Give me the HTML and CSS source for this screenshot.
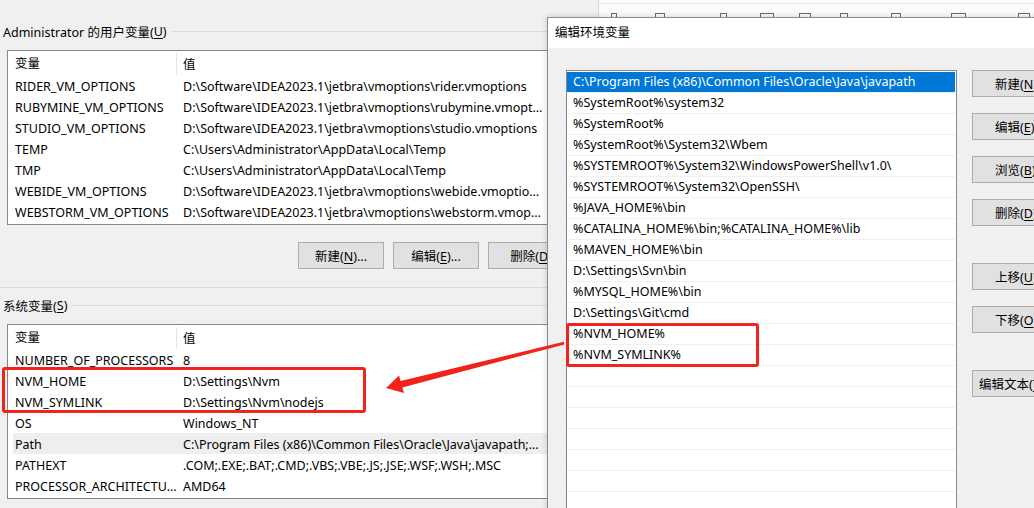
FILE: index.html
```html
<!DOCTYPE html>
<html lang="zh-CN">
<head>
    <meta charset="UTF-8">
    <title>环境变量</title>
    <link rel="stylesheet" href="styles.css">
</head>
<body>
    <!-- Main window: user and system variables -->
    <div class="main-window">
        <div class="group-title user">Administrator 的用户变量(<u>U</u>)</div>
        <div class="var-table user-table">
            <div class="var-head"><div class="col-name">变量</div><div class="col-value">值</div></div>
            <div class="var-row"><div class="col-name">RIDER_VM_OPTIONS</div><div class="col-value">D:\Software\IDEA2023.1\jetbra\vmoptions\rider.vmoptions</div></div>
            <div class="var-row"><div class="col-name">RUBYMINE_VM_OPTIONS</div><div class="col-value">D:\Software\IDEA2023.1\jetbra\vmoptions\rubymine.vmoptions</div></div>
            <div class="var-row"><div class="col-name">STUDIO_VM_OPTIONS</div><div class="col-value">D:\Software\IDEA2023.1\jetbra\vmoptions\studio.vmoptions</div></div>
            <div class="var-row"><div class="col-name">TEMP</div><div class="col-value">C:\Users\Administrator\AppData\Local\Temp</div></div>
            <div class="var-row"><div class="col-name">TMP</div><div class="col-value">C:\Users\Administrator\AppData\Local\Temp</div></div>
            <div class="var-row"><div class="col-name">WEBIDE_VM_OPTIONS</div><div class="col-value">D:\Software\IDEA2023.1\jetbra\vmoptions\webide.vmoptions</div></div>
            <div class="var-row"><div class="col-name">WEBSTORM_VM_OPTIONS</div><div class="col-value">D:\Software\IDEA2023.1\jetbra\vmoptions\webstorm.vmoptions</div></div>
        </div>

        <div class="btn-row">
            <button class="win-btn">新建(<u>N</u>)...</button>
            <button class="win-btn">编辑(<u>E</u>)...</button>
            <button class="win-btn">删除(<u>D</u>)</button>
        </div>

        <div class="divider"></div>

        <div class="group-title system">系统变量(<u>S</u>)</div>
        <div class="var-table sys-table">
            <div class="var-head"><div class="col-name">变量</div><div class="col-value">值</div></div>
            <div class="var-row"><div class="col-name">NUMBER_OF_PROCESSORS</div><div class="col-value">8</div></div>
            <div class="var-row"><div class="col-name">NVM_HOME</div><div class="col-value">D:\Settings\Nvm</div></div>
            <div class="var-row"><div class="col-name">NVM_SYMLINK</div><div class="col-value">D:\Settings\Nvm\nodejs</div></div>
            <div class="var-row"><div class="col-name">OS</div><div class="col-value">Windows_NT</div></div>
            <div class="var-row selected"><div class="col-name">Path</div><div class="col-value">C:\Program Files (x86)\Common Files\Oracle\Java\javapath;C:\Windows\system32</div></div>
            <div class="var-row"><div class="col-name">PATHEXT</div><div class="col-value">.COM;.EXE;.BAT;.CMD;.VBS;.VBE;.JS;.JSE;.WSF;.WSH;.MSC</div></div>
            <div class="var-row"><div class="col-name">PROCESSOR_ARCHITECTURE</div><div class="col-value">AMD64</div></div>
        </div>
    </div>

    <!-- Window peeking out behind the dialog -->
    <div class="back-window">
        <div class="tool-tips">
            <span class="tip" style="margin-left:12px;width:6px"></span>
            <span class="tip" style="margin-left:38px;width:10px"></span>
            <span class="tip" style="margin-left:55px;width:7px"></span>
            <span class="tip" style="margin-left:33px;width:14px"></span>
            <span class="tip" style="margin-left:25px;width:12px"></span>
            <span class="tip" style="margin-left:29px;width:8px"></span>
            <span class="tip" style="margin-left:43px;width:10px"></span>
            <span class="tip" style="margin-left:50px;width:15px"></span>
            <span class="tip" style="margin-left:52px;width:12px"></span>
        </div>
    </div>

    <!-- Edit dialog -->
    <div class="edit-dialog">
        <div class="dialog-title">编辑环境变量</div>
        <div class="dialog-body">
            <div class="path-list">
                <div class="path-row selected">C:\Program Files (x86)\Common Files\Oracle\Java\javapath</div>
                <div class="path-row">%SystemRoot%\system32</div>
                <div class="path-row">%SystemRoot%</div>
                <div class="path-row">%SystemRoot%\System32\Wbem</div>
                <div class="path-row">%SYSTEMROOT%\System32\WindowsPowerShell\v1.0\</div>
                <div class="path-row">%SYSTEMROOT%\System32\OpenSSH\</div>
                <div class="path-row">%JAVA_HOME%\bin</div>
                <div class="path-row">%CATALINA_HOME%\bin;%CATALINA_HOME%\lib</div>
                <div class="path-row">%MAVEN_HOME%\bin</div>
                <div class="path-row">D:\Settings\Svn\bin</div>
                <div class="path-row">%MYSQL_HOME%\bin</div>
                <div class="path-row">D:\Settings\Git\cmd</div>
                <div class="path-row">%NVM_HOME%</div>
                <div class="path-row">%NVM_SYMLINK%</div>
                <div class="path-row"></div>
                <div class="path-row"></div>
                <div class="path-row"></div>
                <div class="path-row"></div>
                <div class="path-row"></div>
                <div class="path-row"></div>
                <div class="path-row"></div>
            </div>
            <div class="side-btns">
                <button class="win-btn side-btn">新建(<u>N</u>)...</button>
                <button class="win-btn side-btn">编辑(<u>E</u>)...</button>
                <button class="win-btn side-btn">浏览(<u>B</u>)...</button>
                <button class="win-btn side-btn">删除(<u>D</u>)</button>
                <button class="win-btn side-btn far">上移(<u>U</u>)</button>
                <button class="win-btn side-btn">下移(<u>O</u>)</button>
                <button class="win-btn side-btn far wide">编辑文本(<u>T</u>)...</button>
            </div>
        </div>
    </div>

    <!-- Annotations -->
    <div class="mark mark-left"></div>
    <div class="mark mark-right"></div>
    <svg class="arrow" width="1034" height="508" viewBox="0 0 1034 508">
        <polygon points="386,388 399,375.5 400.6,381 563.8,341.8 564.4,344.4 402.4,387.4 404,393" fill="#f2231b"/>
    </svg>
</body>
</html>
```

FILE: styles.css
```css
/* Base */
body {
    margin: 0;
    width: 1034px;
    height: 508px;
    overflow: hidden;
    position: relative;
    background: #f0f0f0;
    font-family: "Noto Sans", "Noto Sans CJK SC", sans-serif;
    font-size: 12.5px;
    color: #000;
}

u {
    text-underline-offset: 2px;
}

/* Main window */
.main-window {
    width: 620px;
}

.group-title {
    display: flex;
    align-items: center;
    height: 16px;
    padding-left: 3px;
    white-space: nowrap;
}

.group-title::after {
    content: "";
    flex: 1;
    height: 1px;
    background: #dcdcdc;
    margin-left: 4px;
}

.group-title.user {
    margin-top: 23px;
}

.group-title.system {
    margin-top: 9px;
}

.var-table {
    margin-left: 7px;
    width: 600px;
    background: #fff;
    border: 1px solid #828790;
    padding-bottom: 2px;
}

.user-table {
    margin-top: 11px;
}

.sys-table {
    margin-top: 11px;
}

.var-head,
.var-row {
    display: flex;
    align-items: center;
    box-sizing: border-box;
    padding-top: 1px;
}

.var-head {
    height: 24px;
}

.var-row {
    height: 21px;
}

.col-name,
.col-value {
    box-sizing: border-box;
    white-space: nowrap;
    overflow: hidden;
    text-overflow: ellipsis;
}

.col-name {
    width: 169px;
    padding: 0 0 0 7px;
}

.col-value {
    width: 372px;
    padding: 0 6px 0 6px;
}

.var-head .col-name {
    height: 22px;
    line-height: 22px;
    border-right: 1px solid #e5e5e5;
}

.var-row.selected {
    background: #eeeeee;
    margin-left: 5px;
}

.var-row.selected .col-name {
    width: 164px;
    padding-left: 2px;
}

/* Buttons */
.win-btn {
    box-sizing: border-box;
    width: 86px;
    height: 27px;
    padding: 0;
    background: #e1e1e1;
    border: 1px solid #adadad;
    font: inherit;
    color: #000;
    white-space: nowrap;
}

.btn-row {
    display: flex;
    gap: 9px;
    padding-left: 298px;
    margin-top: 17px;
}

.divider {
    margin-top: 18px;
    height: 1px;
    background: #dadada;
}

/* Window behind the dialog */
.back-window {
    position: absolute;
    left: 598px;
    top: 0;
    width: 436px;
    height: 17px;
    background: #fbfbfb;
    border-left: 1px solid #d6d6d6;
}

.tool-tips {
    display: flex;
    margin-top: 3px;
    border-top: 1px solid #e6e6e6;
    padding-top: 9px;
}

.tip {
    height: 4px;
    border: 1.5px solid #6a6a6a;
    border-bottom: none;
    box-sizing: border-box;
}

/* Edit dialog */
.edit-dialog {
    position: absolute;
    left: 547px;
    top: 17px;
    width: 540px;
    height: 520px;
    background: #f0f0f0;
    border: 1px solid #8e8e8e;
    box-shadow: 0 0 6px rgba(0, 0, 0, 0.18);
}

.dialog-title {
    box-sizing: border-box;
    height: 30px;
    background: #fff;
    padding: 0 0 3px 7px;
    display: flex;
    align-items: center;
}

.dialog-body {
    display: flex;
    align-items: flex-start;
    gap: 15px;
    padding: 22px 0 0 18px;
}

.path-list {
    box-sizing: border-box;
    width: 391px;
    height: 470px;
    background: #fff;
    border: 1px solid #828790;
    padding-top: 1px;
    overflow: hidden;
}

.path-row {
    box-sizing: border-box;
    height: 21px;
    line-height: 20px;
    padding-left: 6px;
    margin-right: 1px;
    border-bottom: 1px solid #f0f0f0;
    white-space: nowrap;
}

.path-row.selected {
    background: #0078d7;
    color: #fff;
}

.side-btns {
    display: flex;
    flex-direction: column;
}

.side-btn {
    width: 104px;
    text-align: left;
    padding-left: 22px;
}

.side-btn.wide {
    padding-left: 6px;
}

.side-btn + .side-btn {
    margin-top: 16px;
}

.side-btn.far {
    margin-top: 37px;
}

/* Red annotations */
.mark {
    position: absolute;
    box-sizing: border-box;
    border: 3px solid #f2231b;
    border-radius: 3px;
}

.mark-left {
    left: 2px;
    top: 367px;
    width: 364px;
    height: 46px;
}

.mark-right {
    left: 566px;
    top: 323px;
    width: 193px;
    height: 44px;
}

.arrow {
    position: absolute;
    left: 0;
    top: 0;
    pointer-events: none;
}
```
